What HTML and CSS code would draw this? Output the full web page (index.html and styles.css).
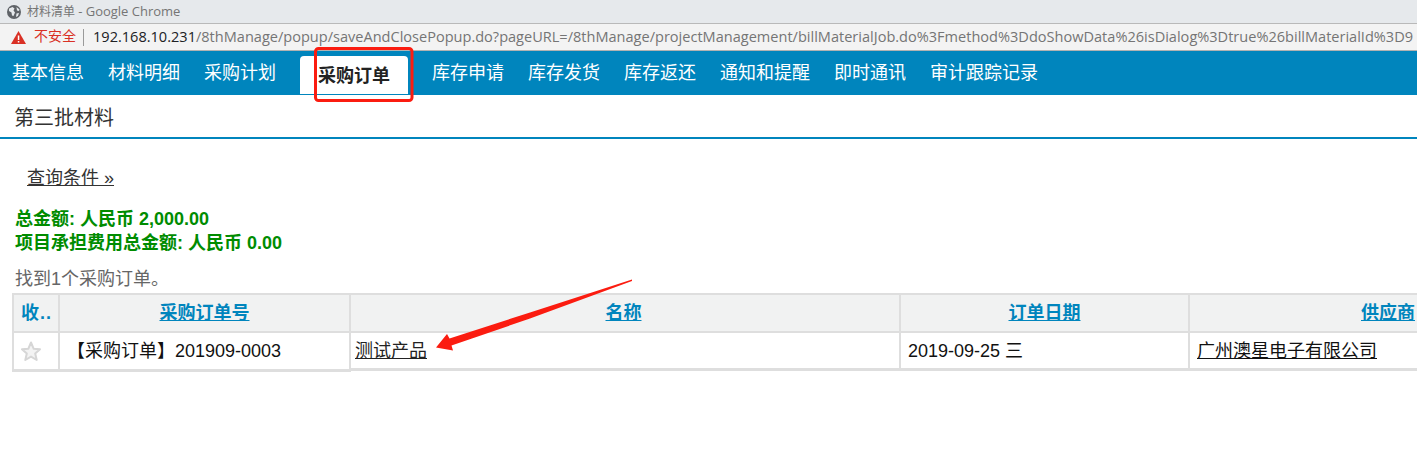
FILE: index.html
```html
<!DOCTYPE html>
<html lang="zh-CN">
<head>
<meta charset="utf-8">
<title>材料清单</title>
<link rel="stylesheet" href="styles.css">
</head>
<body>
<div class="titlebar">
  <svg class="globe" width="14" height="14" viewBox="0 0 14 14"><circle cx="7" cy="7" r="7" fill="#5f6368"/><path d="M2 3.500 L5.500 2 L7.500 3.500 L6.500 5.500 L8 7.500 L6.500 11 L5 10.500 L4.500 7.500 L2 6 Z M9.500 2 L12.500 4.500 L12 6 L10 5.500 Z M9.500 8.500 L12 8 L11 11 L9 12 Z" fill="#e6e9ec"/></svg>
  <span>材料清单 <span class="app">- Google Chrome</span></span>
</div>
<div class="addressbar">
  <svg class="warn" width="15" height="13" viewBox="0 0 15 13"><path d="M7.500 0 L15 13 L0 13 Z" fill="#d93025"/><rect x="6.800" y="4.500" width="1.500" height="4.500" fill="#fff"/><rect x="6.800" y="10" width="1.500" height="1.500" fill="#fff"/></svg>
  <span class="insecure">不安全</span>
  <span class="sep"></span>
  <span class="url"><span class="host">192.168.10.231</span>/8thManage/popup/saveAndClosePopup.do?pageURL=/8thManage/projectManagement/billMaterialJob.do%3Fmethod%3DdoShowData%26isDialog%3Dtrue%26billMaterialId%3D9</span>
</div>
<nav class="tabs">
  <a class="tab">基本信息</a>
  <a class="tab">材料明细</a>
  <a class="tab">采购计划</a>
  <a class="tab active">采购订单</a>
  <a class="tab">库存申请</a>
  <a class="tab">库存发货</a>
  <a class="tab">库存返还</a>
  <a class="tab">通知和提醒</a>
  <a class="tab">即时通讯</a>
  <a class="tab">审计跟踪记录</a>
</nav>
<h1 class="heading">第三批材料</h1>
<main class="content">
  <a class="query">查询条件 »</a>
  <div class="totals">
    <div>总金额: 人民币 2,000.00</div>
    <div>项目承担费用总金额: 人民币 0.00</div>
  </div>
  <p class="count">找到1个采购订单。</p>
  <div class="panes">
    <div class="pane frozen">
      <div class="cell head fav">收..</div>
      <div class="cell head"><a>采购订单号</a></div>
      <div class="cell star">
        <svg width="20" height="21" viewBox="0 0 20 21"><path d="M10 1.500 L12.600 7.700 L19 8.200 L14.200 12.500 L15.700 19 L10 15.600 L4.300 19 L5.800 12.500 L1 8.200 L7.400 7.700 Z" fill="#f3f3f3" stroke="#d6d6d6" stroke-width="2" stroke-linejoin="round"/></svg>
      </div>
      <div class="cell order">【采购订单】201909-0003</div>
    </div>
    <div class="pane scroll">
      <div class="cell head name"><a>名称</a></div>
      <div class="cell head"><a>订单日期</a></div>
      <div class="cell head"><a>供应商</a></div>
      <div class="cell product"><a>测试产品</a></div>
      <div class="cell date">2019-09-25 三</div>
      <div class="cell date"><a>广州澳星电子有限公司</a></div>
    </div>
  </div>
</main>
<svg class="annotation" width="1417" height="469" viewBox="0 0 1417 469">
  <rect x="315.500" y="48.500" width="96.500" height="52" rx="3" fill="none" stroke="#fb1c10" stroke-width="3"/>
  <path d="M632 279.500 L632 281 L530 318.500 L451.500 345.500 L453 350.500 L436 347.500 L447 334 L449.500 338.500 L530 312.500 Z" fill="#fb1c10"/>
</svg>
</body>
</html>
```
FILE: styles.css
```css
* { box-sizing: border-box; }
html, body { margin: 0; height: 469px; overflow: hidden; background: #fff; }
body { font: 18px/24px "Liberation Sans", "Noto Sans CJK SC", sans-serif; color: #222; position: relative; }
a { color: inherit; }

.titlebar { height: 24px; background: #e6e9ec; border-bottom: 1px solid #b9b9b9; display: flex; align-items: center; gap: 6px; padding-left: 7px; font: 12px/16px "Open Sans", "Noto Sans CJK SC", sans-serif; color: #757575; }
.app { font-size: 13px; }
.addressbar { height: 27px; padding-bottom: 2px; background: #f3f3f3; border-bottom: 1px solid #b2b2b2; display: flex; align-items: center; padding-left: 11px; white-space: nowrap; overflow: hidden; font: 14.55px/20px "Open Sans", "Noto Sans CJK SC", sans-serif; }
.warn { margin-top: 2px; }
.insecure { color: #d93025; margin-left: 8px; font-size: 14px; }
.sep { width: 1px; height: 17px; margin: 2px 9px 0 7px; background: #9a9a9a; flex: none; }
.url { color: #757575; }
.host { color: #202124; }

.tabs { height: 44px; background: #0085bd; display: flex; gap: 24px; padding: 5px 0 1px 12px; color: #fff; }
.tab { height: 38px; line-height: 34px; }
.active { background: #fff; color: #222; font-weight: bold; padding: 3px 18px 0; border-radius: 4px 4px 0 0; }

.heading { margin: 0; height: 44px; padding: 11px 0 0 14px; border-bottom: 2px solid #0085bd; font-size: 20px; line-height: 24px; font-weight: normal; color: #333; }

.content { padding: 27px 0 0 12px; }
.query { display: inline-block; margin-left: 15px; text-decoration: underline; color: #333; }
.totals { margin: 17px 0 0 3px; font-weight: bold; color: #008c00; }
.count { margin: 12px 0 0 3px; color: #666; height: 26px; }

.panes { display: flex; align-items: flex-start; }
.pane { display: grid; gap: 2px; background: #dedede; padding: 2px 0 3px; }
.frozen { grid-template-columns: 44px 289px; grid-template-rows: 36px 36px; padding-left: 2px; padding-right: 2px; flex: none; }
.scroll { grid-template-columns: 548px 287px 396px; grid-template-rows: 36px 35px; flex: none; }
.cell { background: #fff; display: flex; align-items: center; white-space: nowrap; }
.head { background: #f1f2f2; color: #0085bd; font-weight: bold; justify-content: center; }
.head a, .cell a { text-decoration: underline; }
.fav { justify-content: flex-start; padding-left: 7px; letter-spacing: 1px; }
.star { padding-left: 7px; }
.order { padding-left: 7px; color: #111; }
.name { padding-right: 3px; }
.product { padding-left: 4px; color: #222; }
.date { padding-left: 7px; color: #111; }

.annotation { position: absolute; left: 0; top: 0; pointer-events: none; }
```
